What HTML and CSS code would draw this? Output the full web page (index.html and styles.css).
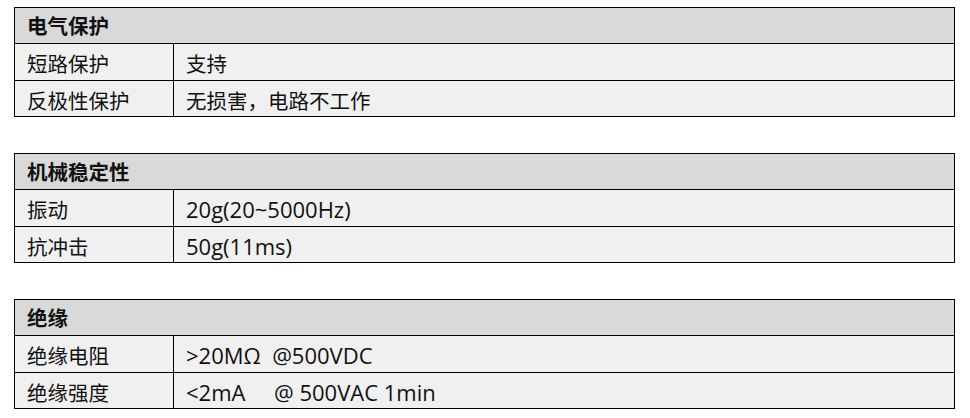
FILE: index.html
```html
<!DOCTYPE html>
<html lang="zh-CN">
<head>
<meta charset="utf-8">
<title>规格</title>
<link rel="stylesheet" href="styles.css">
</head>
<body>
<div class="page">
  <div class="spec">
    <div class="spec-title">电气保护</div>
    <div class="cell key">短路保护</div><div class="cell val">支持</div>
    <div class="cell key last">反极性保护</div><div class="cell val last">无损害，电路不工作</div>
  </div>
  <div class="spec">
    <div class="spec-title">机械稳定性</div>
    <div class="cell key">振动</div><div class="cell val num">20g(20~5000Hz)</div>
    <div class="cell key last">抗冲击</div><div class="cell val num last">50g(11ms)</div>
  </div>
  <div class="spec">
    <div class="spec-title">绝缘</div>
    <div class="cell key">绝缘电阻</div><div class="cell val num">&gt;20MΩ  @500VDC</div>
    <div class="cell key last">绝缘强度</div><div class="cell val num last">&lt;2mA     @ 500VAC 1min</div>
  </div>
</div>
</body>
</html>
```
FILE: styles.css
```css
html, body {
  margin: 0;
  padding: 0;
  background: #fff;
}
.page {
  padding: 7px 0 0 14px;
  width: 941px;
  display: flex;
  flex-direction: column;
  gap: 36px;
  font-family: "Open Sans", "Noto Sans CJK SC", sans-serif;
  font-size: 20.5px;
  color: #111;
}
.spec {
  border: 1px solid #000;
  display: grid;
  grid-template-columns: 159px 1fr;
  grid-template-rows: 36px 37px 35px;
}
.spec-title {
  grid-column: 1 / 3;
  background: #d9d9d9;
  border-bottom: 1px solid #000;
  font-weight: bold;
  padding-left: 12px;
  display: flex;
  align-items: center;
  padding-bottom: 2px;
  box-sizing: border-box;
}
.cell {
  background: #f0f0f0;
  border-bottom: 1px solid #000;
  display: flex;
  align-items: center;
  white-space: pre;
  box-sizing: border-box;
  padding-top: 2px;
}
.cell.last {
  border-bottom: none;
}
.key {
  border-right: 1px solid #000;
  padding-left: 12px;
}
.val {
  padding-left: 12px;
}
.num {
  font-size: 22px;
}
```
